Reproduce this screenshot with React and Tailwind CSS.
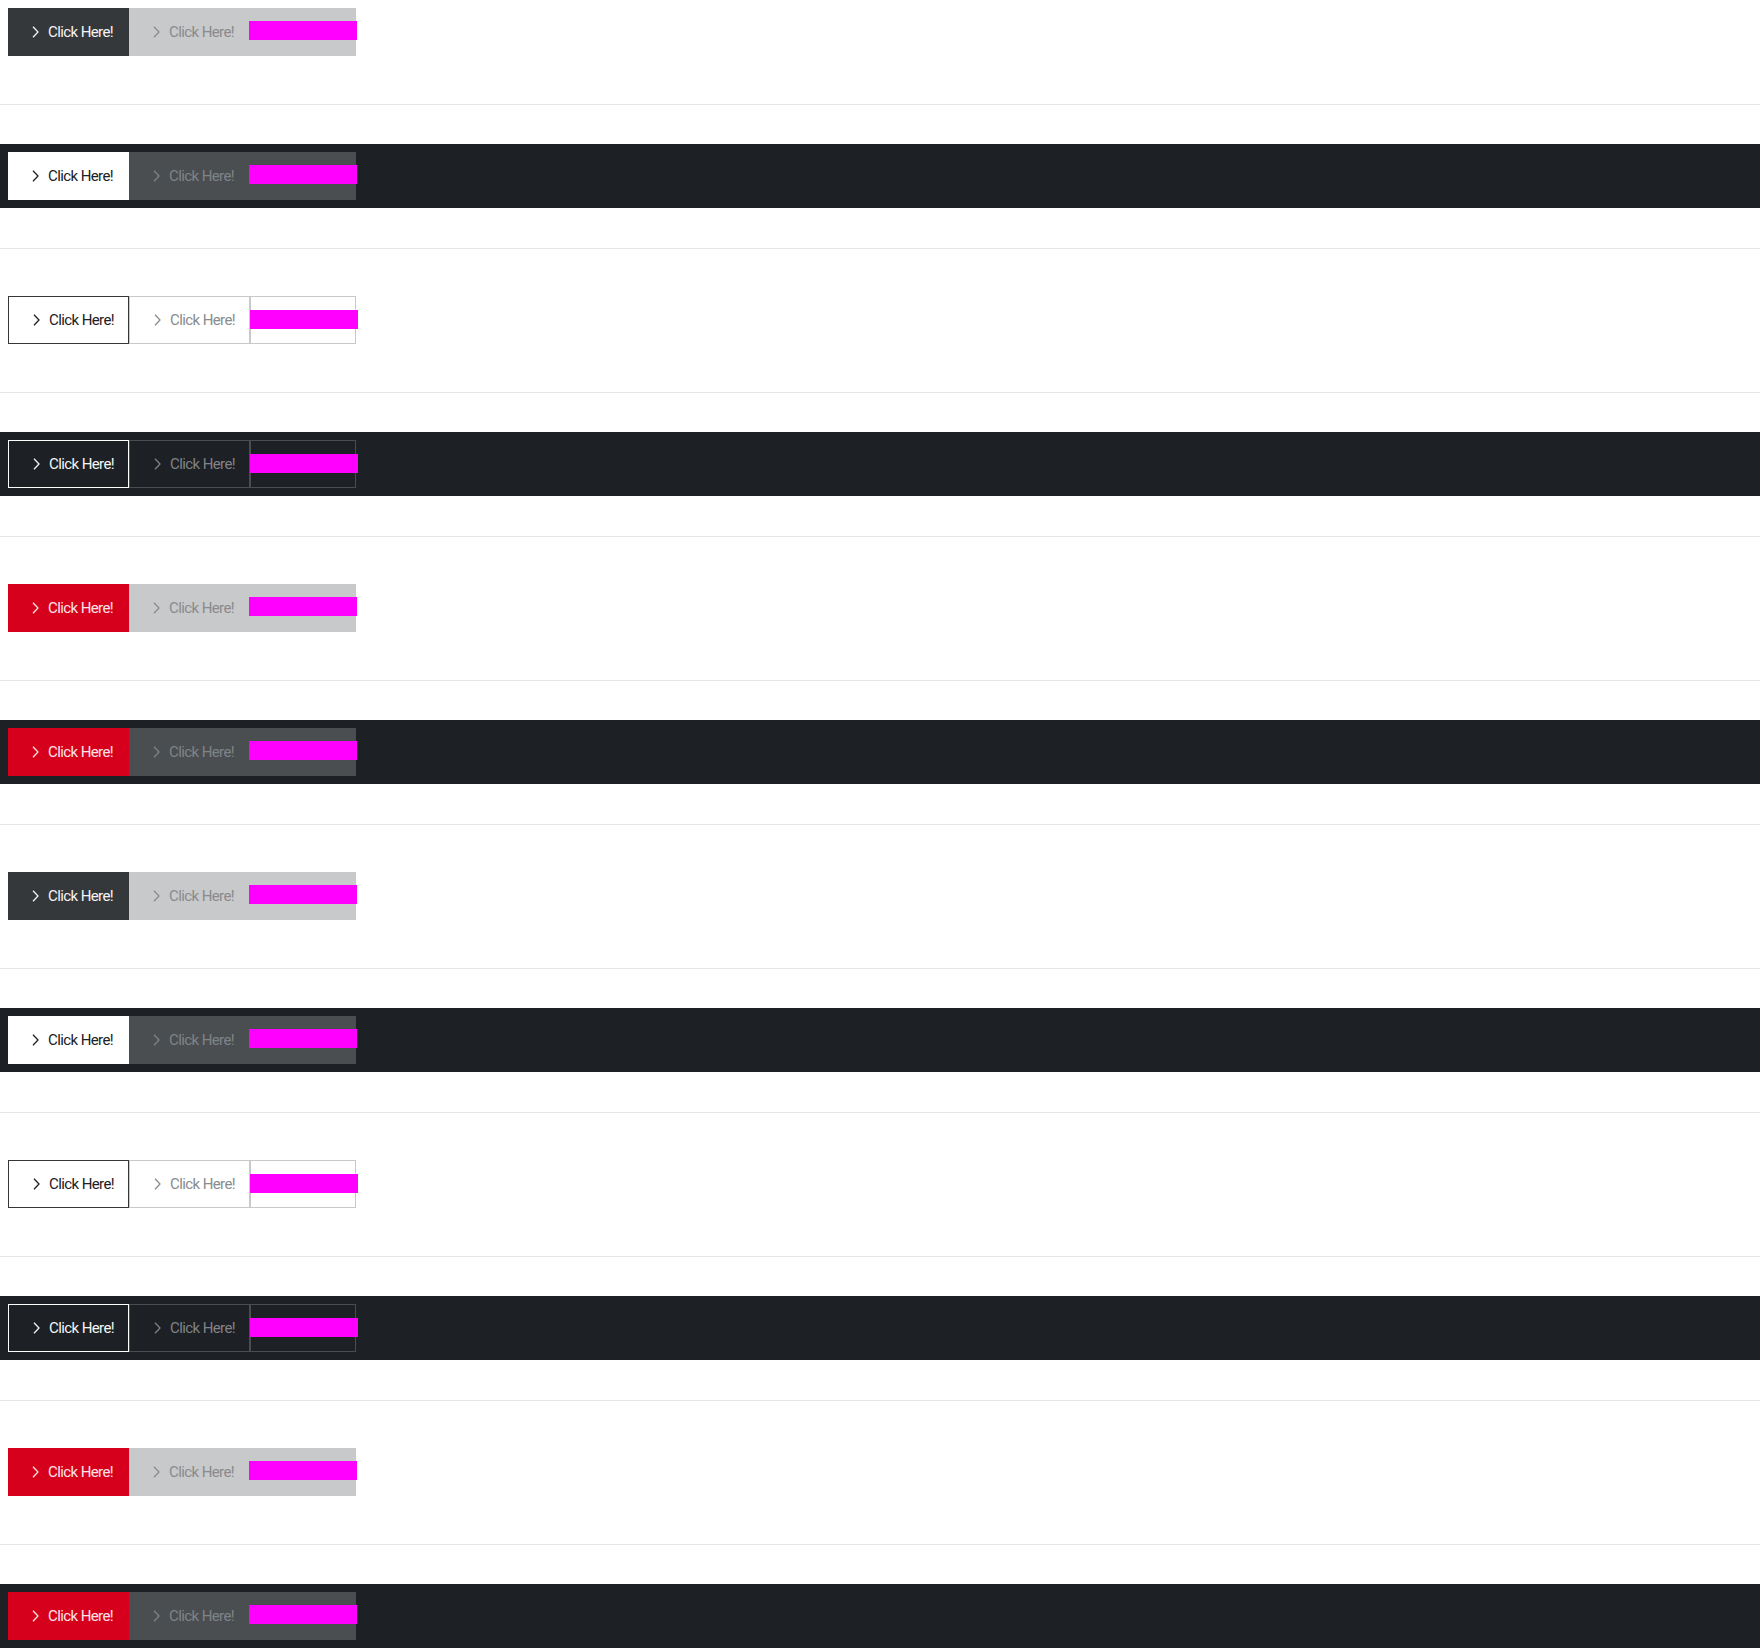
import React from "react";

const Chevron = ({ className }) => (
  <svg
    width="7"
    height="12"
    viewBox="0 0 7 12"
    fill="none"
    className={className}
  >
    <path d="M1 0.8l5 5.2-5 5.2" stroke="currentColor" strokeWidth="1.3" />
  </svg>
);

const styles = {
  fill: {
    light: {
      primary: "bg-[#34383b] text-[#f4f4f4]",
      secondary: "bg-[#c8c9ca] text-[#898b8d]",
      third: "bg-[#c8c9ca]",
    },
    dark: {
      primary: "bg-white text-[#1d2024]",
      secondary: "bg-[#4a4e51] text-[#808386]",
      third: "bg-[#4a4e51]",
    },
  },
  outline: {
    light: {
      primary: "border border-[#34383b] text-[#1d2024]",
      secondary: "border border-[#c8c9ca] text-[#898b8d]",
      third: "border border-[#c8c9ca]",
    },
    dark: {
      primary: "border border-white text-[#f4f4f4]",
      secondary: "border border-[#4a4e51] text-[#808386]",
      third: "border border-[#4a4e51]",
    },
  },
  red: {
    light: {
      primary: "bg-[#d6001c] text-[#fbe5e8]",
      secondary: "bg-[#c8c9ca] text-[#898b8d]",
      third: "bg-[#c8c9ca]",
    },
    dark: {
      primary: "bg-[#d6001c] text-[#fbe5e8]",
      secondary: "bg-[#4a4e51] text-[#808386]",
      third: "bg-[#4a4e51]",
    },
  },
};

const sections = [
  { dark: false, variant: "fill" },
  { dark: true, variant: "fill" },
  { dark: false, variant: "outline" },
  { dark: true, variant: "outline" },
  { dark: false, variant: "red" },
  { dark: true, variant: "red" },
  { dark: false, variant: "fill" },
  { dark: true, variant: "fill" },
  { dark: false, variant: "outline" },
  { dark: true, variant: "outline" },
  { dark: false, variant: "red" },
  { dark: true, variant: "red" },
];

const ButtonRow = ({ dark, variant }) => {
  const s = styles[variant][dark ? "dark" : "light"];
  return (
    <div className={`p-2 ${dark ? "bg-[#1d2024]" : "bg-white"}`}>
      <div className="flex">
        <button
          className={`h-12 w-[121px] flex items-center pl-[24px] gap-[9px] text-[15px] font-normal tracking-[-0.6px] leading-none ${s.primary}`}
        >
          <Chevron />
          <span>Click Here!</span>
        </button>
        <button
          className={`h-12 w-[121px] flex items-center pl-[24px] gap-[9px] text-[15px] font-normal tracking-[-0.6px] leading-none ${s.secondary}`}
        >
          <Chevron />
          <span>Click Here!</span>
        </button>
        <div className={`relative h-12 w-[106px] ${s.third}`}>
          <div className="absolute left-[-1px] top-[13px] h-[19px] w-[108px] bg-[#ff00ff]" />
        </div>
      </div>
    </div>
  );
};

export default function App() {
  return (
    <div
      className="w-[1760px] bg-white"
      style={{ fontFamily: "Roboto, 'Liberation Sans', sans-serif" }}
    >
      {sections.map((sec, i) => (
        <div key={i}>
          <ButtonRow dark={sec.dark} variant={sec.variant} />
          {i < sections.length - 1 && (
            <>
              <div className="h-10" />
              <div className="border-t border-[#e5e5e5]" />
              <div className="h-[39px]" />
            </>
          )}
        </div>
      ))}
    </div>
  );
}
